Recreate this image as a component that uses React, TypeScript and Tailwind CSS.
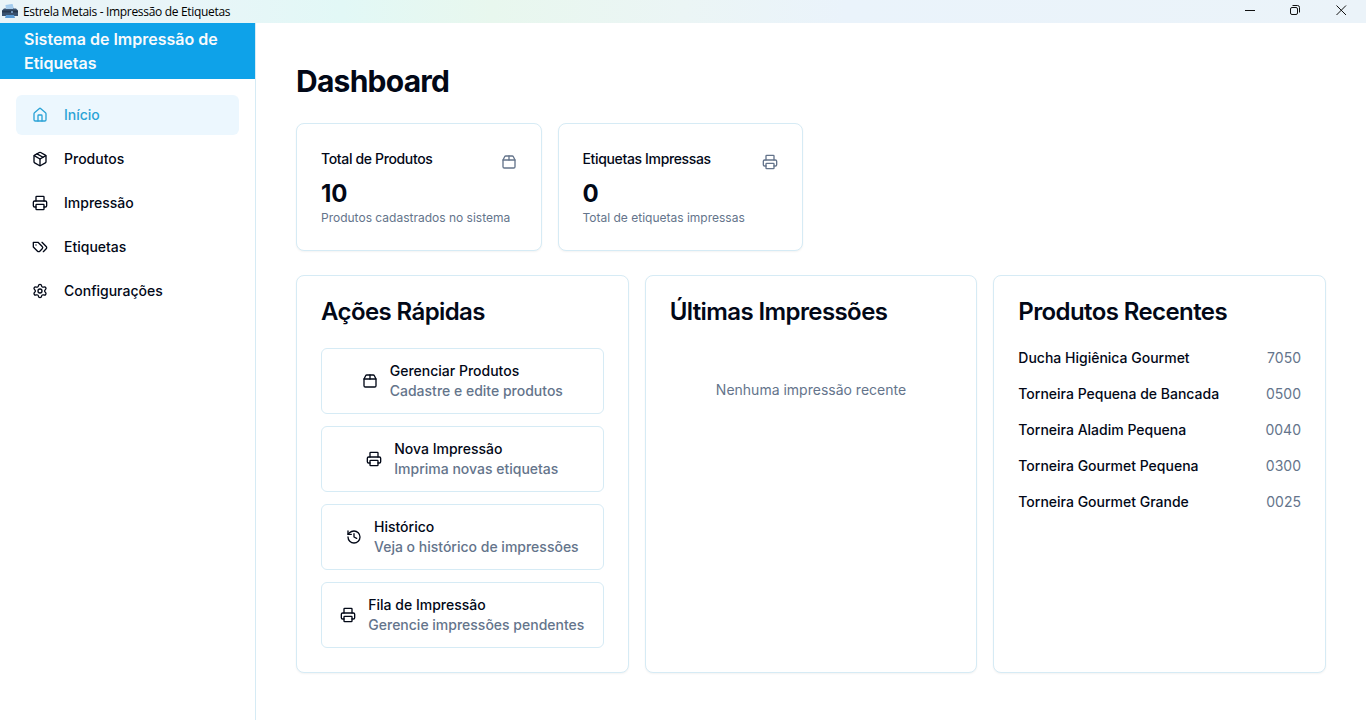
import React from 'react';
import { House, Package2, Printer, Settings, History } from 'lucide-react';

type IconType = React.ComponentType<{ size?: number; className?: string }>;

function BoxIcon({ size = 16, className }: { size?: number; className?: string }) {
  return (
    <svg width={size} height={size} className={className} viewBox="0 0 24 24" fill="none" stroke="currentColor" strokeWidth="2" strokeLinecap="round" strokeLinejoin="round">
      <path d="m7.5 4.270 9 5.150" />
      <path d="M21 8a2 2 0 0 0-1-1.730l-7-4a2 2 0 0 0-2 0l-7 4A2 2 0 0 0 3 8v8a2 2 0 0 0 1 1.730l7 4a2 2 0 0 0 2 0l7-4A2 2 0 0 0 21 16Z" />
      <path d="m3.300 7 8.700 5 8.700-5" />
      <path d="M12 22V12" />
    </svg>
  );
}

function TagsIcon({ size = 16, className }: { size?: number; className?: string }) {
  return (
    <svg width={size} height={size} className={className} viewBox="0 0 24 24" fill="none" stroke="currentColor" strokeWidth="2" strokeLinecap="round" strokeLinejoin="round">
      <path d="M9 5H2v7l6.290 6.290c.94.94 2.480.94 3.420 0l3.580-3.580c.94-.94.94-2.480 0-3.420L9 5Z" />
      <path d="M6 9.010V9" />
      <path d="m15 5 6.300 6.300a2.400 2.400 0 0 1 0 3.400L17 19" />
    </svg>
  );
}

const nav: { label: string; icon: IconType; active?: boolean }[] = [
  { label: 'Início', icon: House, active: true },
  { label: 'Produtos', icon: BoxIcon },
  { label: 'Impressão', icon: Printer },
  { label: 'Etiquetas', icon: TagsIcon },
  { label: 'Configurações', icon: Settings },
];

const stats = [
  { title: 'Total de Produtos', value: '10', note: 'Produtos cadastrados no sistema', icon: Package2 },
  { title: 'Etiquetas Impressas', value: '0', note: 'Total de etiquetas impressas', icon: Printer },
];

const actions = [
  { title: 'Gerenciar Produtos', note: 'Cadastre e edite produtos', icon: Package2 },
  { title: 'Nova Impressão', note: 'Imprima novas etiquetas', icon: Printer },
  { title: 'Histórico', note: 'Veja o histórico de impressões', icon: History },
  { title: 'Fila de Impressão', note: 'Gerencie impressões pendentes', icon: Printer },
];

const products = [
  ['Ducha Higiênica Gourmet', '7050'],
  ['Torneira Pequena de Bancada', '0500'],
  ['Torneira Aladim Pequena', '0040'],
  ['Torneira Gourmet Pequena', '0300'],
  ['Torneira Gourmet Grande', '0025'],
];

function PrinterLogo() {
  return (
    <svg width="16" height="16" viewBox="0 0 16 16" className="mb-px">
      <path d="M3.500 2 10.500 1l1.500 5H4z" fill="#9cc8ee" />
      <path d="M2 5.500h12l2 2V13H0V7.500z" fill="#3a5270" />
      <path d="M4 2.500h7V6H4z" fill="#a9cdec" />
      <path d="M0 7.500h16v2H0z" fill="#26384f" />
      <path d="M4 12h8l1 3H3z" fill="#5b9bd5" />
      <circle cx="10" cy="9" r="1" fill="#8db4dc" />
    </svg>
  );
}

function TitleBar() {
  return (
    <div className="flex h-[23px] shrink-0 items-center justify-between bg-[linear-gradient(90deg,#eaf4f8_0%,#e8f5f8_14%,#e2f8f6_25%,#e8f7ee_36%,#ebf5f5_50%,#eaf3fb_62%,#ebf3f9_100%)] pl-0.5">
      <div className="flex items-center gap-[5px]">
        <PrinterLogo />
        <span className="pt-px font-['Open_Sans','Noto_Sans',sans-serif] text-[12px] leading-4 tracking-[-0.32px] text-black">Estrela Metais - Impressão de Etiquetas</span>
      </div>
      <svg width="130" height="23" viewBox="0 0 130 23" fill="none" stroke="#111">
        <path d="M9 10.500h10" />
        <rect x="54.500" y="7.500" width="7" height="7" rx="1.500" />
        <path d="M56.500 5.500h5a2 2 0 0 1 2 2v5" />
        <path d="M100.500 5.500l9.500 9.500M110 5.500l-9.500 9.500" />
      </svg>
    </div>
  );
}

function Card({ title, children }: { title: string; children: React.ReactNode }) {
  return (
    <section className="rounded-lg border border-[#d6ebf5] bg-white p-6 shadow-xs">
      <h2 className="mb-6 text-2xl leading-none font-semibold tracking-tight">{title}</h2>
      {children}
    </section>
  );
}

export default function App() {
  return (
    <div className="flex h-screen flex-col overflow-hidden bg-white font-['Inter',sans-serif] text-[#020817]">
      <TitleBar />
      <div className="flex min-h-0 flex-1">
        <aside className="w-64 shrink-0 border-r border-[#d6ebf5]">
          <div className="flex h-14 items-center bg-[#0ea2e9] px-6 font-semibold text-[#f8fafc]">Sistema de Impressão de Etiquetas</div>
          <nav className="flex flex-col gap-1 p-4">
            {nav.map(({ label, icon: Icon, active }) => (
              <a key={label} className={`flex h-10 items-center gap-4 rounded-md px-4 text-sm font-medium ${active ? 'bg-[#ecf7fe] text-[#2ba3d6]' : ''}`}>
                <Icon size={16} />
                {label}
              </a>
            ))}
          </nav>
        </aside>
        <main className="flex-1 px-10 pt-10">
          <h1 className="mb-6 text-[30px] leading-9 font-bold tracking-tight">Dashboard</h1>
          <div className="mb-6 grid grid-cols-4 gap-4">
            {stats.map(({ title, value, note, icon: Icon }) => (
              <section key={title} className="rounded-lg border border-[#d6ebf5] bg-white p-6 shadow-xs">
                <div className="mb-2 flex h-[22px] items-end justify-between">
                  <h3 className="text-sm leading-[22px] font-medium tracking-tight">{title}</h3>
                  <Icon size={16} className="text-[#64748b]" />
                </div>
                <div className="text-2xl font-bold">{value}</div>
                <p className="text-xs text-[#64748b]">{note}</p>
              </section>
            ))}
          </div>
          <div className="grid grid-cols-3 gap-4">
            <Card title="Ações Rápidas">
              <div className="flex flex-col gap-3">
                {actions.map(({ title, note, icon: Icon }) => (
                  <button key={title} className="flex items-center justify-center gap-3 rounded-md border border-[#d6ebf5] p-3 text-left text-sm font-medium">
                    <Icon size={16} />
                    <span className="flex flex-col">
                      <span>{title}</span>
                      <span className="text-[#64748b]">{note}</span>
                    </span>
                  </button>
                ))}
              </div>
            </Card>
            <Card title="Últimas Impressões">
              <p className="py-8 text-center text-sm text-[#64748b]">Nenhuma impressão recente</p>
            </Card>
            <Card title="Produtos Recentes">
              <ul className="flex flex-col gap-4 text-sm">
                {products.map(([name, code]) => (
                  <li key={name} className="flex justify-between">
                    <span className="font-medium">{name}</span>
                    <span className="text-[#64748b]">{code}</span>
                  </li>
                ))}
              </ul>
            </Card>
          </div>
        </main>
      </div>
    </div>
  );
}
